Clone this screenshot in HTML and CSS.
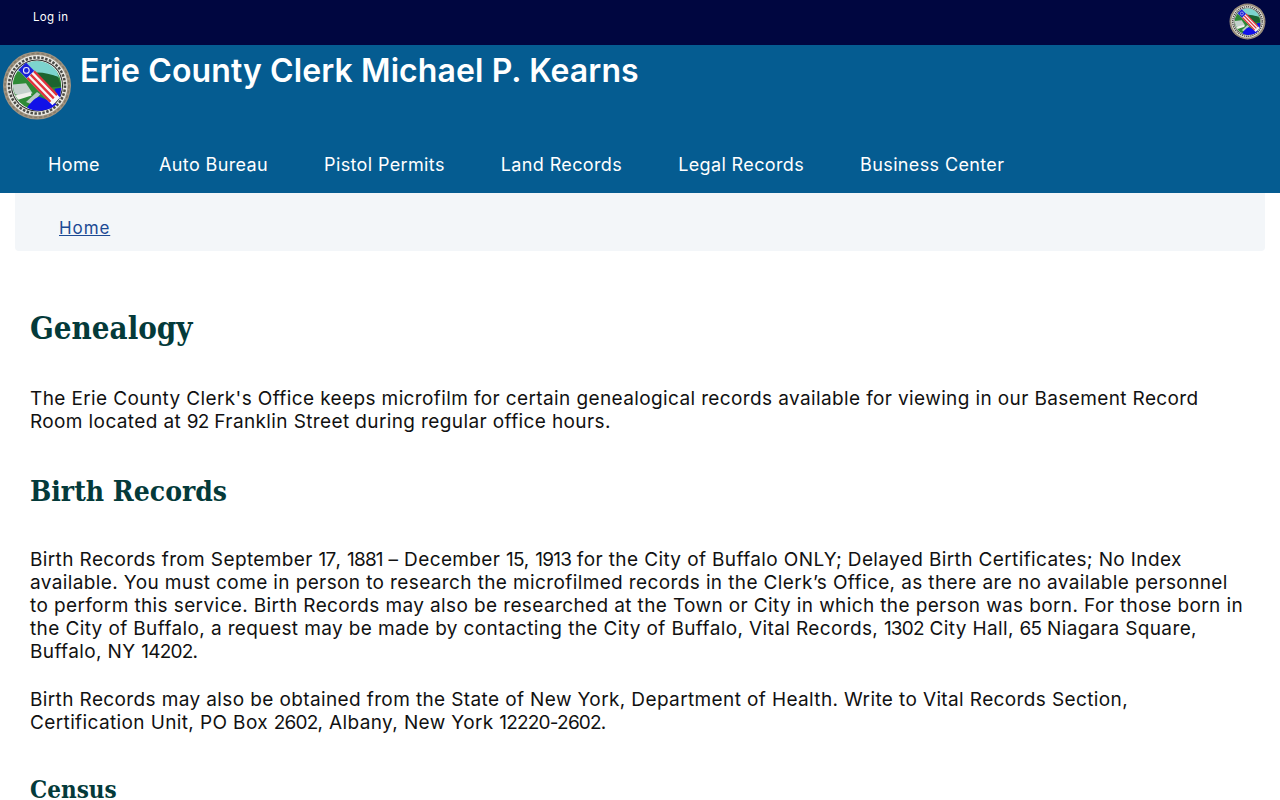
FILE: index.html
```html
<!doctype html>
<html lang="en">
<head>
	<meta charset="utf-8" />
	<title>Genealogy</title>
	<link rel="stylesheet" href="styles.css">
</head>
<body>
	<svg class="defs" width="0" height="0">
		<symbol id="seal" viewBox="0 0 68 70">
			<circle cx="34" cy="35" r="34" fill="#a09482"/>
			<circle cx="34" cy="35" r="32" fill="none" stroke="#857a68" stroke-width="1.500" stroke-dasharray="3 2"/>
			<circle cx="34" cy="35" r="30.500" fill="#e9e8e2"/>
			<circle cx="34" cy="35" r="28" fill="none" stroke="#4a4a46" stroke-width="2.500" stroke-dasharray="2.500 1.500"/>
			<circle cx="34" cy="35" r="26" fill="#2c2c2a"/>
			<circle cx="34" cy="35" r="25" fill="#fff"/>
			<g transform="translate(34 35) scale(1.100) translate(-34 -35)">
				<circle cx="34" cy="35" r="22" fill="#2e8a36"/>
				<path d="M16 22a22 22 0 0 1 36 0l2 6c-7-3-14-4-22-3z" fill="#7dd4ce"/>
				<path d="M28 24c8-2 16 0 25 3l3 9-12 1z" fill="#1c6430"/>
				<path d="M12 34l12-1 6 9-8 3-8-2c-1-3-2-6-2-9z" fill="#c4d0cc"/>
				<path d="M14 44l14-3 1 3-12 4z" fill="#f0f0ec"/>
				<path d="M24 50l10-9 3 2-8 9z" fill="#b8c8c4"/>
				<path d="M25 55c3-4 6-8 11-10l16 7c-4 3-7 5-10 5-6 2-12 1-17-2z" fill="#1111e8"/>
				<path d="M50 38l6-1-1 9-2 2z" fill="#1111e8"/>
				<path d="M17 21l7-7 31 32-7 7z" fill="#f5f5f5"/>
				<path d="M30.500 22.800l1.500-1.500 21 21.700-1.500 1.500zM27.500 25.800l1.500-1.500 21 21.700-1.500 1.500zM24.500 28.800l1.500-1.500 21 21.700-1.500 1.500z" fill="#e0323c"/>
				<path d="M17 21l7-7 7.500 7.500-7 7z" fill="#1a22d8"/>
				<circle cx="24.300" cy="21.300" r="2.600" fill="none" stroke="#e8e8f8" stroke-width="1"/>
			</g>
		</symbol>
	</svg>
	<div class="top-bar">
		<a class="login" href="#">Log in</a>
		<svg class="seal-small"><use href="#seal"/></svg>
	</div>
	<header class="site-head">
		<div class="brand">
			<svg class="seal-big"><use href="#seal"/></svg>
			<span class="site-name">Erie County Clerk Michael P. Kearns</span>
		</div>
		<ul class="main-nav">
			<li><a href="#">Home</a></li>
			<li><a href="#">Auto Bureau</a></li>
			<li><a href="#">Pistol Permits</a></li>
			<li><a href="#">Land Records</a></li>
			<li><a href="#">Legal Records</a></li>
			<li><a href="#">Business Center</a></li>
		</ul>
	</header>
	<div class="crumbs"><a href="#">Home</a></div>
	<main class="content">
		<h1>Genealogy</h1>
		<p class="intro">The Erie County Clerk's Office keeps microfilm for certain genealogical records available for viewing in our Basement Record<br>Room located at <span class="num">92</span> Franklin Street during regular office hours.</p>
		<h2>Birth Records</h2>
		<p>Birth Records from September <span class="num">17</span>, <span class="num">1881</span> – December <span class="num">15</span>, <span class="num">1913</span> for the City of Buffalo ONLY; Delayed Birth Certificates; No Index<br>available. You must come in person to research the microfilmed records in the Clerk’s Office, as there are no available personnel<br>to perform this service. Birth Records may also be researched at the Town or City in which the person was born. For those born in<br>the City of Buffalo, a request may be made by contacting the City of Buffalo, Vital Records, <span class="num">1302</span> City Hall, <span class="num">65</span> Niagara Square,<br>Buffalo, NY <span class="num">14202</span>.</p>
		<p>Birth Records may also be obtained from the State of New York, Department of Health. Write to Vital Records Section,<br>Certification Unit, PO Box <span class="num">2602</span>, Albany, New York <span class="num">12220-2602</span>.</p>
		<h3>Census</h3>
	</main>
</body>
</html>
```

FILE: styles.css
```css
* {
	margin: 0;
	padding: 0;
	box-sizing: border-box;
}
html, body {
	height: 800px;
	overflow: hidden;
}
body {
	font-family: "Inter", "Open Sans", sans-serif;
	color: #111;
	background-color: #fff;
}
ul {
	list-style-type: none;
}
.defs {
	display: block;
	height: 0;
}
/* top bar */
.top-bar {
	height: 45px;
	padding: 3px 14px 0 33px;
	background-color: #000640;
	display: flex;
	justify-content: space-between;
	align-items: flex-start;
}
.login {
	margin-top: 6px;
	font-size: 11.5px;
	line-height: 16px;
	letter-spacing: 0.35px;
	color: #fff;
	text-decoration: none;
}
.seal-small {
	width: 37px;
	height: 37px;
}
/* header */
.site-head {
	height: 148px;
	background-color: #055c91;
	color: #fff;
}
.brand {
	height: 91px;
	padding: 5px 0 0 3px;
	display: flex;
	align-items: flex-start;
	gap: 9px;
}
.seal-big {
	width: 68px;
	height: 71px;
}
.site-name {
	margin-top: 1px;
	font-size: 32px;
	line-height: 40px;
	font-weight: 600;
	letter-spacing: 0.1px;
}
.main-nav {
	padding-left: 48px;
	display: flex;
	gap: 56px;
}
.main-nav li:first-child {
	min-width: 55px;
}
.main-nav a {
	font-size: 18px;
	line-height: 58px;
	letter-spacing: 0.37px;
	color: #fff;
	text-decoration: none;
}
/* breadcrumb */
.crumbs {
	height: 58px;
	margin: 0 15px;
	padding: 25px 44px 0;
	background-color: #f3f6f9;
	border-radius: 0 0 4px 4px;
	font-size: 17px;
	line-height: 20px;
	letter-spacing: 0.9px;
}
.crumbs a {
	color: #1c4a94;
}
/* page text */
.content {
	padding: 0 30px;
}
.content h1,
.content h2,
.content h3 {
	font-family: "DejaVu Serif Condensed", "DejaVu Serif", "Liberation Serif", serif;
	font-weight: 700;
	color: #043a3a;
}
h1 {
	margin-top: 55px;
	font-size: 31px;
	line-height: 44px;
}
h2 {
	margin-top: 39px;
	font-size: 28px;
	line-height: 40px;
}
h3 {
	margin-top: 40px;
	font-size: 24px;
	line-height: 32px;
}
.content p {
	font-size: 19px;
	line-height: 23px;
	letter-spacing: 0.38px;
}
.content .num {
	letter-spacing: -0.8px;
}
.intro {
	margin-top: 37px;
}
h2 + p {
	margin-top: 36px;
}
p + p {
	margin-top: 25px;
}
```
